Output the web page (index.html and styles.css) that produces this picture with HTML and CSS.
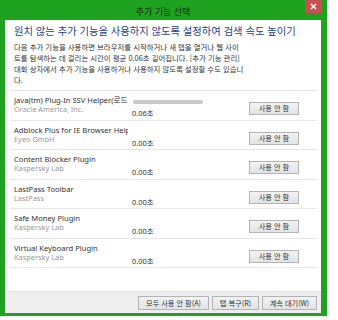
FILE: index.html
```html
<!DOCTYPE html>
<html lang="ko">

<head>
    <meta charset="UTF-8">
    <meta name="viewport" content="width=device-width, initial-scale=1.0">
    <title>추가 기능 선택</title>
    <link rel="stylesheet" href="styles.css">
</head>

<body>
    <div class="window">
        <div class="title-bar">
            <span class="title">추가 기능 선택</span>
            <span class="close-btn">
                <svg width="7" height="7" viewBox="0 0 7 7"><path d="M1 1L6 6M6 1L1 6" stroke="#fff" stroke-width="1.6"/></svg>
            </span>
        </div>
        <div class="content">
            <h1 class="heading">원치 않는 추가 기능을 사용하지 않도록 설정하여 검색 속도 높이기</h1>
            <p class="desc">다음 추가 기능을 사용하면 브라우저를 시작하거나 새 탭을 열거나 웹 사이<br>트를 탐색하는 데 걸리는 시간이 평균 0.06초 길어집니다. [추가 기능 관리]<br>대화 상자에서 추가 기능을 사용하거나 사용하지 않도록 설정할 수도 있습니<br>다.</p>

            <div class="list">
                <div class="row">
                    <div class="info">
                        <div class="name">Java(tm) Plug-In SSV Helper(로드 중...)</div>
                        <div class="publisher">Oracle America, Inc.</div>
                    </div>
                    <div class="timing">
                        <div class="bar"></div>
                        <div class="time">0.06초</div>
                    </div>
                    <button class="btn">사용 안 함</button>
                </div>
                <div class="row">
                    <div class="info">
                        <div class="name">Adblock Plus for IE Browser Helper Object</div>
                        <div class="publisher">Eyeo GmbH</div>
                    </div>
                    <div class="timing">
                        <div class="time">0.00초</div>
                    </div>
                    <button class="btn">사용 안 함</button>
                </div>
                <div class="row">
                    <div class="info">
                        <div class="name">Content Blocker Plugin</div>
                        <div class="publisher">Kaspersky Lab</div>
                    </div>
                    <div class="timing">
                        <div class="time">0.00초</div>
                    </div>
                    <button class="btn">사용 안 함</button>
                </div>
                <div class="row">
                    <div class="info">
                        <div class="name">LastPass Toolbar</div>
                        <div class="publisher">LastPass</div>
                    </div>
                    <div class="timing">
                        <div class="time">0.00초</div>
                    </div>
                    <button class="btn">사용 안 함</button>
                </div>
                <div class="row">
                    <div class="info">
                        <div class="name">Safe Money Plugin</div>
                        <div class="publisher">Kaspersky Lab</div>
                    </div>
                    <div class="timing">
                        <div class="time">0.00초</div>
                    </div>
                    <button class="btn">사용 안 함</button>
                </div>
                <div class="row">
                    <div class="info">
                        <div class="name">Virtual Keyboard Plugin</div>
                        <div class="publisher">Kaspersky Lab</div>
                    </div>
                    <div class="timing">
                        <div class="time">0.00초</div>
                    </div>
                    <button class="btn">사용 안 함</button>
                </div>
            </div>

            <div class="footer">
                <button class="btn btn-a">모두 사용 안 함(A)</button>
                <button class="btn btn-r">탭 복구(R)</button>
                <button class="btn btn-w">계속 대기(W)</button>
            </div>
        </div>
    </div>
</body>

</html>
```

FILE: styles.css
```css
body {
    margin: 0;
    background-color: #fff;
    font-family: "Noto Sans", "Noto Sans CJK KR", sans-serif;
}

.window {
    width: 327px;
    height: 316px;
    box-sizing: border-box;
    background-color: #1fa21f;
    padding: 0 6px 3px 5px;
    display: flex;
    flex-direction: column;
}

.title-bar {
    height: 20px;
    flex-shrink: 0;
    position: relative;
    display: flex;
    justify-content: center;
    align-items: center;
}

.title {
    font-family: "Noto Sans CJK KR", sans-serif;
    font-size: 9px;
    color: #1a2a1a;
    margin-top: 2px;
}

.close-btn {
    position: absolute;
    right: -1px;
    top: 0;
    width: 17px;
    height: 13px;
    background-color: #c85050;
    display: flex;
    justify-content: center;
    align-items: center;
}

.content {
    flex: 1;
    background-color: #fff;
    display: flex;
    flex-direction: column;
}

.heading {
    margin: 4px 0 0 9px;
    font-family: "Noto Sans CJK KR", sans-serif;
    font-weight: normal;
    font-size: 10.3px;
    line-height: 14px;
    color: #1f3f86;
    white-space: nowrap;
}

.desc {
    margin: 2.5px 0 0 9px;
    font-family: "Noto Sans CJK KR", sans-serif;
    font-size: 7.4px;
    line-height: 11px;
    color: #333;
    white-space: nowrap;
}

.list {
    margin: 5.5px 4px 0 5px;
    border-top: 1px solid #e6e6e6;
}

.row {
    height: 29.5px;
    box-sizing: border-box;
    border-bottom: 1px solid #e6e6e6;
    display: flex;
    align-items: flex-start;
    padding-left: 4px;
}

.info {
    width: 114px;
    overflow: hidden;
    white-space: nowrap;
    padding-top: 5px;
    margin-right: 4px;
}

.name {
    font-size: 7.6px;
    line-height: 9px;
    color: #333;
}

.publisher {
    font-size: 7.4px;
    line-height: 9px;
    color: #999;
}

.timing {
    width: 117px;
    height: 28px;
    position: relative;
}

.bar {
    position: absolute;
    left: 1px;
    top: 9px;
    width: 70px;
    height: 4px;
    border-radius: 2px;
    background-color: #c9c9c9;
}

.time {
    position: absolute;
    left: 0;
    top: 18px;
    font-size: 7.4px;
    line-height: 9px;
    color: #333;
}

.btn {
    font-family: "Noto Sans CJK KR", sans-serif;
    font-size: 7.2px;
    color: #333;
    background: linear-gradient(#f2f2f2, #e3e3e3);
    border: 1px solid #b4b4b4;
    border-radius: 0;
    padding: 0;
    height: 13px;
    line-height: 11px;
}

.row .btn {
    width: 50px;
    margin-top: 11px;
}

.footer {
    margin-top: auto;
    margin-left: 3px;
    height: 22px;
    box-sizing: border-box;
    background-color: #eeeeee;
    border-top: 1px solid #e2e2e2;
    display: flex;
    justify-content: flex-end;
    align-items: flex-start;
    gap: 3px;
    padding: 4px 4px 0 0;
}

.footer .btn {
    height: 14px;
}

.btn-a {
    width: 71px;
}

.btn-r {
    width: 47px;
}

.btn-w {
    width: 55px;
}
```
